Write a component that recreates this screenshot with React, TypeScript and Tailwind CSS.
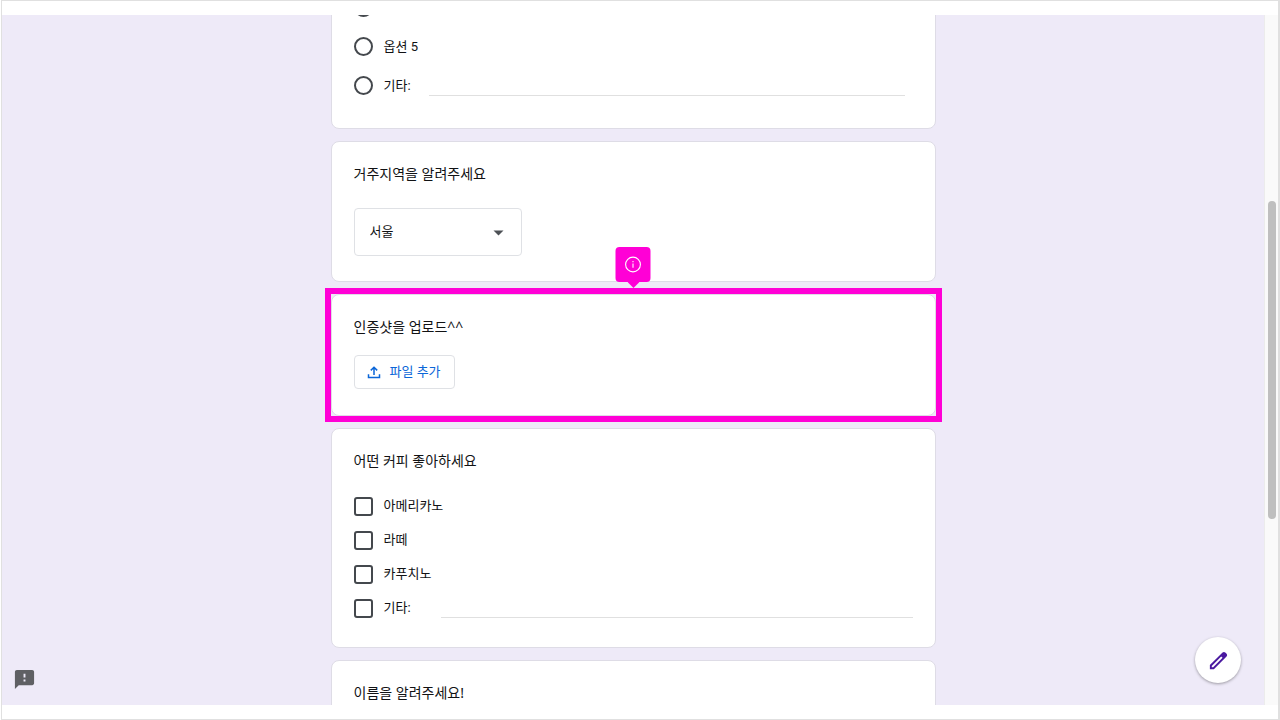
import { useState } from "react";
import type { ReactNode } from "react";

const COFFEES = ["아메리카노", "라떼", "카푸치노"];

const REGIONS = ["서울", "경기", "부산", "제주"];

function Card({ children, className = "" }: { children: ReactNode; className?: string }) {
  return (
    <section className={`relative rounded-lg border border-[#dedce6] bg-white px-[22px] pt-[22px] ${className}`}>
      {children}
    </section>
  );
}

function Title({ children }: { children: ReactNode }) {
  return (
    <h2 className="font-['Noto_Sans','Noto_Sans_CJK_KR',sans-serif] text-[14px] leading-5 font-normal text-[#111214]">
      {children}
    </h2>
  );
}

function Radio({ id, label }: { id: string; label?: string }) {
  return (
    <input
      id={id}
      type="radio"
      name="option"
      aria-label={label}
      className="size-[19px] shrink-0 appearance-none rounded-full border-2 border-[#44484d] bg-white checked:border-[6px]"
    />
  );
}

function Checkbox({ id }: { id: string }) {
  return (
    <input
      id={id}
      type="checkbox"
      className="size-[19px] shrink-0 appearance-none rounded-[3px] border-2 border-[#44484d] bg-white checked:bg-[#44484d]"
    />
  );
}

export default function App() {
  const [region, setRegion] = useState("서울");

  return (
    <div className="h-screen bg-white pl-px font-['Roboto','Noto_Sans_CJK_KR',sans-serif] text-[13px] text-[#111214]">
      <div className="flex h-full flex-col border border-r-2 border-[#e0e0e0] py-[14px]">
        <div className="flex min-h-0 flex-1">
          {/* Form canvas */}
          <main className="relative min-w-0 flex-1 overflow-hidden bg-[#eeeaf8]">
            <form className="mx-auto -mt-[50px] flex w-full max-w-[605px] flex-col gap-3" onSubmit={(e) => e.preventDefault()}>
              <Card className="pb-[23px]">
                <div className="flex h-[39px] items-center">
                  <Radio id="option-4" label="옵션 4" />
                </div>
                <div className="flex h-[39px] items-center gap-[11px]">
                  <Radio id="option-5" />
                  <label htmlFor="option-5">옵션 5</label>
                </div>
                <div className="flex h-[39px] items-center gap-[11px] pr-2">
                  <Radio id="option-etc" />
                  <label htmlFor="option-etc">기타:</label>
                  <input
                    type="text"
                    aria-label="기타 옵션"
                    className="ml-[7px] h-5 min-w-0 flex-1 border-b border-[#e0e0e0] outline-none"
                  />
                </div>
              </Card>

              <Card className="pb-[25px]">
                <Title>거주지역을 알려주세요</Title>
                <div className="relative mt-6 w-[168px]">
                  <select
                    aria-label="거주지역"
                    value={region}
                    onChange={(e) => setRegion(e.target.value)}
                    className="h-12 w-full appearance-none rounded border border-[#dfe1e5] bg-white pr-8 pl-[15px] text-[13px]"
                  >
                    {REGIONS.map((r) => (
                      <option key={r}>{r}</option>
                    ))}
                  </select>
                  <svg className="pointer-events-none absolute top-[22px] right-[18px]" width="11" height="6" viewBox="0 0 11 6" fill="#4d5156">
                    <path d="M0.5 0.5h10l-5 5z" />
                  </svg>
                </div>
              </Card>

              <Card className="pb-[26px]">
                {/* Highlight frame */}
                <div className="pointer-events-none absolute -inset-[7px] border-[6px] border-[#ff00d6]" />
                <div className="absolute -top-12 left-1/2 flex size-[35px] -translate-x-1/2 items-center justify-center rounded bg-[#ff00d6]">
                  <svg width="17" height="17" viewBox="0 0 17 17" fill="none" stroke="white" strokeWidth="1.1">
                    <circle cx="8.5" cy="8.5" r="7.4" />
                    <path d="M8.5 7.4v4.4M8.5 5v1.3" />
                  </svg>
                  <svg className="absolute top-full" width="12" height="6" viewBox="0 0 12 6" fill="#ff00d6">
                    <path d="M0 0h12L6 6z" />
                  </svg>
                </div>

                <Title>인증샷을 업로드^^</Title>
                <button
                  type="button"
                  className="mt-[18px] flex h-[34px] items-center gap-[9px] rounded border border-[#dfe1e5] bg-white pr-[13px] pl-3 text-[13px] text-[#0b66d8]"
                >
                  <svg width="14" height="14" viewBox="0 0 14 14" fill="none" stroke="currentColor" strokeWidth="1.5">
                    <path d="M1.5 9.2v3.3h11V9.2M7 10V2.4M3.8 5.4L7 2.2l3.2 3.2" />
                  </svg>
                  파일 추가
                </button>
              </Card>

              <Card className="pb-[22px]">
                <Title>어떤 커피 좋아하세요</Title>
                <div className="mt-[18px]">
                  {COFFEES.map((coffee, i) => (
                    <div key={coffee} className="flex h-[34px] items-center gap-[11px]">
                      <Checkbox id={`coffee-${i}`} />
                      <label htmlFor={`coffee-${i}`}>{coffee}</label>
                    </div>
                  ))}
                  <div className="flex h-[34px] items-center gap-[11px]">
                    <Checkbox id="coffee-etc" />
                    <label htmlFor="coffee-etc">기타:</label>
                    <input
                      type="text"
                      aria-label="기타 커피"
                      className="ml-[19px] h-5 min-w-0 flex-1 border-b border-[#e0e0e0] outline-none"
                    />
                  </div>
                </div>
              </Card>

              <Card className="pb-20">
                <Title>이름을 알려주세요!</Title>
              </Card>
            </form>

            <button type="button" aria-label="문제 신고" className="absolute bottom-[14px] left-[11px] text-[#5f6064]">
              <svg width="23" height="23" viewBox="0 0 24 24" fill="currentColor">
                <path d="M20 2H4c-1.1 0-2 .9-2 2v18l4-4h14c1.1 0 2-.9 2-2V4c0-1.1-.9-2-2-2zm-7 12h-2v-2h2v2zm0-4h-2V6h2v4z" />
              </svg>
            </button>

            <button
              type="button"
              aria-label="양식 수정"
              className="absolute right-[23px] bottom-[22px] flex size-[46px] items-center justify-center rounded-full bg-white text-[#4a19a0] shadow-[0_1px_3px_rgba(0,0,0,0.35)]"
            >
              <svg width="23" height="23" viewBox="0 0 24 24" fill="currentColor">
                <path d="M20.41 4.94l-1.35-1.35c-.78-.78-2.05-.78-2.83 0L3 16.82V21h4.18L20.41 7.77c.79-.78.79-2.05 0-2.83zm-14 14.12L5 19v-1.36l9.82-9.82 1.41 1.41-9.82 9.83z" />
              </svg>
            </button>
          </main>

          {/* Scrollbar */}
          <div className="flex w-[14px] flex-col items-center border-l border-[#ececec] bg-[#fafafa]">
            <div className="h-[27%]" />
            <div className="h-[46%] w-2 rounded-full bg-[#bfbfbf]" />
          </div>
        </div>
      </div>
    </div>
  );
}
